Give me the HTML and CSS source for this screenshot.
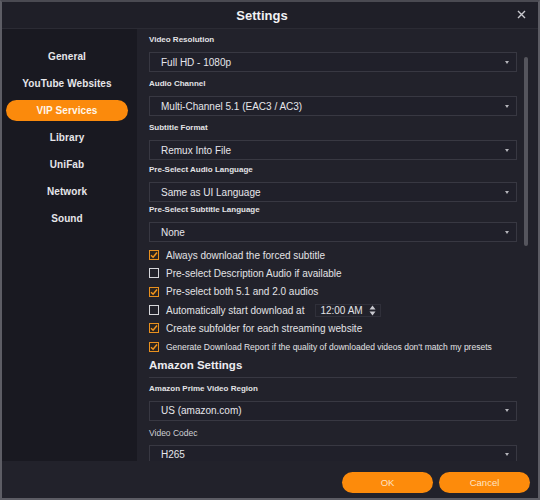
FILE: index.html
```html
<!DOCTYPE html>
<html>
<head>
<meta charset="utf-8">
<link rel="stylesheet" href="styles.css">
</head>
<body>
<div class="window">
  <div class="titlebar">
    <span class="title">Settings</span>
    <span class="close"><svg width="9" height="9" viewBox="0 0 9 9"><path d="M1 1L8 8M8 1L1 8" stroke="#c9c9cf" stroke-width="1.4" fill="none"/></svg></span>
  </div>
  <div class="main">
    <nav class="sidebar">
      <div class="nav-item">General</div>
      <div class="nav-item">YouTube Websites</div>
      <div class="nav-item active">VIP Services</div>
      <div class="nav-item">Library</div>
      <div class="nav-item">UniFab</div>
      <div class="nav-item">Network</div>
      <div class="nav-item">Sound</div>
    </nav>
    <div class="content">
      <div class="group">
        <div class="label">Video Resolution</div>
        <div class="select"><span>Full HD - 1080p</span><span class="arrow"></span></div>
      </div>
      <div class="group">
        <div class="label">Audio Channel</div>
        <div class="select"><span>Multi-Channel 5.1 (EAC3 / AC3)</span><span class="arrow"></span></div>
      </div>
      <div class="group snug">
        <div class="label">Subtitle Format</div>
        <div class="select"><span>Remux Into File</span><span class="arrow"></span></div>
      </div>
      <div class="group flush">
        <div class="label">Pre-Select Audio Language</div>
        <div class="select"><span>Same as UI Language</span><span class="arrow"></span></div>
      </div>
      <div class="group flush">
        <div class="label">Pre-Select Subtitle Language</div>
        <div class="select"><span>None</span><span class="arrow"></span></div>
      </div>
      <div class="checks">
        <div class="check-row"><span class="box checked"><svg width="8" height="8" viewBox="0 0 8 8"><path d="M1 4.2L3.1 6.2L7 1.6" stroke="#f2941c" stroke-width="1.5" fill="none"/></svg></span><span>Always download the forced subtitle</span></div>
        <div class="check-row"><span class="box"></span><span>Pre-select Description Audio if available</span></div>
        <div class="check-row"><span class="box checked"><svg width="8" height="8" viewBox="0 0 8 8"><path d="M1 4.2L3.1 6.2L7 1.6" stroke="#f2941c" stroke-width="1.5" fill="none"/></svg></span><span>Pre-select both 5.1 and 2.0 audios</span></div>
        <div class="check-row"><span class="box"></span><span>Automatically start download at</span>
          <span class="time"><span>12:00 AM</span><svg class="spin" width="7" height="11" viewBox="0 0 7 11"><path d="M3.5 0.5L6.5 4.5H0.5Z M3.5 10.5L6.5 6.5H0.5Z" fill="#c9c9cf"/></svg></span>
        </div>
        <div class="check-row"><span class="box checked"><svg width="8" height="8" viewBox="0 0 8 8"><path d="M1 4.2L3.1 6.2L7 1.6" stroke="#f2941c" stroke-width="1.5" fill="none"/></svg></span><span>Create subfolder for each streaming website</span></div>
        <div class="check-row small"><span class="box checked"><svg width="8" height="8" viewBox="0 0 8 8"><path d="M1 4.2L3.1 6.2L7 1.6" stroke="#f2941c" stroke-width="1.5" fill="none"/></svg></span><span>Generate Download Report if the quality of downloaded videos don't match my presets</span></div>
      </div>
      <div class="section-title">Amazon Settings</div>
      <div class="group">
        <div class="label">Amazon Prime Video Region</div>
        <div class="select"><span>US (amazon.com)</span><span class="arrow"></span></div>
      </div>
      <div class="group">
        <div class="label regular">Video Codec</div>
        <div class="select"><span>H265</span><span class="arrow"></span></div>
      </div>
      <div class="scrollbar"></div>
    </div>
  </div>
  <div class="footer">
    <button class="btn">OK</button>
    <button class="btn">Cancel</button>
  </div>
</div>
</body>
</html>
```

FILE: styles.css
```css
* { box-sizing: border-box; }
html, body { margin: 0; padding: 0; background: #22222b; }
body { font-family: "Liberation Sans", Arial, sans-serif; color: #e4e4e8; }

.window {
  width: 540px;
  height: 500px;
  border: 2px solid #5d5d65;
  border-top-color: #4a4a52;
  background: #22222b;
  display: flex;
  flex-direction: column;
}

.titlebar {
  position: relative;
  height: 27px;
  flex: none;
  background: #1f1f28;
  border-bottom: 1px solid #2b2b34;
  display: flex;
  align-items: center;
  padding-right: 16px;
}
.title {
  flex: 1;
  text-align: center;
  font-size: 13px;
  font-weight: bold;
  color: #f2f2f4;
}
.close {
  position: absolute;
  left: 515px;
  top: 8px;
  display: flex;
}

.main {
  flex: 1;
  display: flex;
  min-height: 0;
}

.sidebar {
  width: 135px;
  flex: none;
  background: #191921;
  padding-top: 17px;
  display: flex;
  flex-direction: column;
  gap: 6px;
}
.nav-item {
  height: 21px;
  margin: 0 9px 0 4px;
  border-radius: 11px;
  display: flex;
  align-items: center;
  justify-content: center;
  font-size: 10px;
  font-weight: bold;
  color: #e6e6ea;
  letter-spacing: 0.1px;
}
.nav-item.active {
  background: #fb8a0c;
  color: #fff6ea;
}

.content {
  position: relative;
  flex: 1;
  overflow: hidden;
  padding: 3px 21px 0 12px;
}

.group { margin-bottom: 4px; }
.group.snug { margin-bottom: 2px; }
.group.flush { margin-bottom: 0; }
.label {
  height: 16px;
  line-height: 16px;
  font-size: 8px;
  font-weight: bold;
  color: #e2e2e6;
  margin-bottom: 4px;
}
.label.regular { font-weight: normal; font-size: 8.5px; color: #cfcfd4; }

.select {
  height: 20px;
  border: 1px solid #383842;
  background: #20202a;
  display: flex;
  align-items: center;
  justify-content: space-between;
  padding: 0 7px 0 11px;
  font-size: 10px;
  color: #e6e6ea;
}
.arrow {
  width: 0;
  height: 0;
  border-left: 2.5px solid transparent;
  border-right: 2.5px solid transparent;
  border-top: 3px solid #b5b5bb;
}

.checks { padding-top: 4px; }
.check-row {
  height: 18.3px;
  display: flex;
  align-items: center;
  gap: 7px;
  font-size: 10px;
  color: #e2e2e6;
}
.check-row.small { font-size: 8.5px; }
.box {
  width: 10px;
  height: 10px;
  flex: none;
  border: 1px solid #d6d6da;
  display: flex;
  align-items: center;
  justify-content: center;
}
.box.checked {
  border-color: #e8901f;
  background: #2a2420;
}
.time {
  margin-left: 4px;
  height: 13px;
  padding: 0 4px 0 4px;
  border: 1px solid #30303a;
  display: flex;
  align-items: center;
  gap: 6px;
}

.section-title {
  margin-top: 1px;
  height: 21px;
  line-height: 16px;
  font-size: 11.5px;
  font-weight: bold;
  color: #ececf0;
  border-bottom: 1px solid #383842;
  margin-bottom: 3px;
}

.scrollbar {
  position: absolute;
  left: 387px;
  top: 28px;
  width: 4px;
  height: 189px;
  background: #55555d;
  border-radius: 2px;
}

.footer {
  height: 37px;
  flex: none;
  background: #22222b;
  display: flex;
  justify-content: flex-end;
  align-items: flex-start;
  gap: 6px;
  padding: 11px 8px 0 0;
}
.btn {
  width: 91px;
  height: 21px;
  border: none;
  border-radius: 11px;
  background: #fd8b0b;
  color: #ffe3c4;
  font-family: "Liberation Sans", Arial, sans-serif;
  font-size: 9.5px;
  padding: 0;
}
```
